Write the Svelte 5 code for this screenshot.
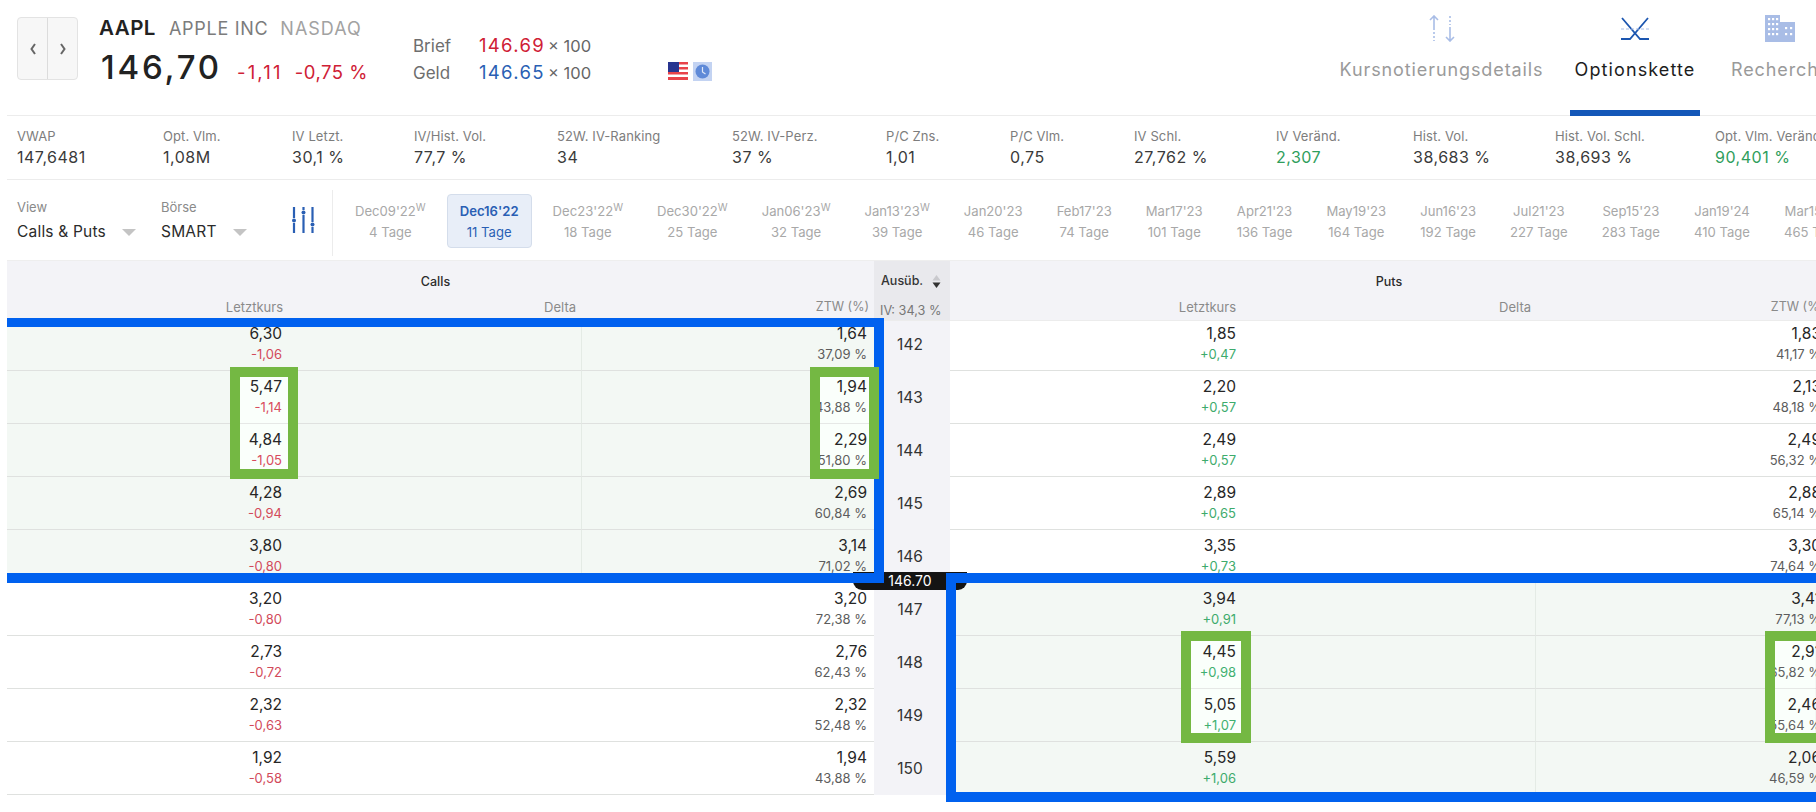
<script>
  const stats = [
    { l: 'VWAP', v: '147,6481' }, { l: 'Opt. Vlm.', v: '1,08M' }, { l: 'IV Letzt.', v: '30,1 %' },
    { l: 'IV/Hist. Vol.', v: '77,7 %' }, { l: '52W. IV-Ranking', v: '34' }, { l: '52W. IV-Perz.', v: '37 %' },
    { l: 'P/C Zns.', v: '1,01' }, { l: 'P/C Vlm.', v: '0,75' }, { l: 'IV Schl.', v: '27,762 %' },
    { l: 'IV Veränd.', v: '2,307', g: true }, { l: 'Hist. Vol.', v: '38,683 %' }, { l: 'Hist. Vol. Schl.', v: '38,693 %' },
    { l: 'Opt. Vlm. Veränd.', v: '90,401 %', g: true }
  ];
  const exps = [
    ["Dec09'22", '4 Tage', true], ["Dec16'22", '11 Tage', false, true], ["Dec23'22", '18 Tage', true],
    ["Dec30'22", '25 Tage', true], ["Jan06'23", '32 Tage', true], ["Jan13'23", '39 Tage', true],
    ["Jan20'23", '46 Tage'], ["Feb17'23", '74 Tage'], ["Mar17'23", '101 Tage'], ["Apr21'23", '136 Tage'],
    ["May19'23", '164 Tage'], ["Jun16'23", '192 Tage'], ["Jul21'23", '227 Tage'], ["Sep15'23", '283 Tage'],
    ["Jan19'24", '410 Tage'], ["Mar15'24", '465 Tage']
  ];
  const rows = [
    [142, '6,30', '-1,06', '1,64', '37,09 %', '1,85', '+0,47', '1,83', '41,17 %'],
    [143, '5,47', '-1,14', '1,94', '43,88 %', '2,20', '+0,57', '2,13', '48,18 %'],
    [144, '4,84', '-1,05', '2,29', '51,80 %', '2,49', '+0,57', '2,49', '56,32 %'],
    [145, '4,28', '-0,94', '2,69', '60,84 %', '2,89', '+0,65', '2,88', '65,14 %'],
    [146, '3,80', '-0,80', '3,14', '71,02 %', '3,35', '+0,73', '3,30', '74,64 %'],
    [147, '3,20', '-0,80', '3,20', '72,38 %', '3,94', '+0,91', '3,41', '77,13 %'],
    [148, '2,73', '-0,72', '2,76', '62,43 %', '4,45', '+0,98', '2,91', '65,82 %'],
    [149, '2,32', '-0,63', '2,32', '52,48 %', '5,05', '+1,07', '2,46', '55,64 %'],
    [150, '1,92', '-0,58', '1,94', '43,88 %', '5,59', '+1,06', '2,06', '46,59 %']
  ];
</script>

<div class="page">
  <header class="top">
    <div class="nav">
      <button class="navb" aria-label="prev"><svg width="10" height="14" viewBox="0 0 10 14"><path d="M7 2 3.500 7 7 12" fill="none" stroke="#666" stroke-width="2"/></svg></button>
      <button class="navb" aria-label="next"><svg width="10" height="14" viewBox="0 0 10 14"><path d="M3 2l3.500 5L3 12" fill="none" stroke="#666" stroke-width="2"/></svg></button>
    </div>
    <div class="sym">
      <div class="symline"><b>AAPL</b><span class="co">APPLE INC</span><span class="ex">NASDAQ</span></div>
      <div class="priceline"><span class="price">146,70</span><span class="chg chg1">-1,11</span><span class="chg">-0,75 %</span></div>
    </div>
    <div class="quote">
      <div class="ql"><span class="qn">Brief</span><span class="qv red">146.69</span><span class="qs">× 100</span></div>
      <div class="ql"><span class="qn">Geld</span><span class="qv blue">146.65</span><span class="qs">× 100</span></div>
    </div>
    <div class="flags">
      <svg width="20" height="18" viewBox="0 0 20 18">
        <rect width="20" height="18" fill="#fff"/>
        <g fill="#e8434a"><rect y="0" width="20" height="2.5"/><rect y="5" width="20" height="2.5"/><rect y="10" width="20" height="2.5"/><rect y="15" width="20" height="3"/></g>
        <rect width="11" height="10" fill="#27348f"/>
      </svg>
      <svg width="19" height="19" viewBox="0 0 19 19">
        <rect width="19" height="19" fill="#c3d3f2"/>
        <circle cx="9.5" cy="9.5" r="7" fill="#5f8ad8"/>
        <path d="M9.5 5v5l3 2" fill="none" stroke="#dfe8f8" stroke-width="1.2"/>
      </svg>
    </div>
    <nav class="tabs">
      <div class="tab kurs">
        <svg width="26" height="27" viewBox="0 0 26 27" fill="none" stroke="#a9bde6" stroke-width="1.6">
          <path d="M5 1v14M1 5l4-4 4 4"/><path d="M5 17v9" stroke-dasharray="2 2"/>
          <path d="M21 1v9" stroke-dasharray="2 2"/><path d="M21 12v14M17 22l4 4 4-4"/>
        </svg>
        <span>Kursnotierungsdetails</span>
      </div>
      <div class="tab opt active">
        <svg width="30" height="27" viewBox="0 0 30 27" fill="none" stroke="#1c56b0" stroke-width="1.8">
          <path d="M2 3l18 21h9M28 3 10 24H1"/><path d="M1 14h28" stroke="#a9bde6" stroke-width="1" stroke-dasharray="3 2"/>
        </svg>
        <span>Optionskette</span>
      </div>
      <div class="tab res">
        <svg width="30" height="27" viewBox="0 0 30 27">
          <path d="M0 0h15v7h15v20H0z" fill="#a9bde6"/>
          <g fill="#fff">
            <rect x="3" y="3" width="2.2" height="2.2"/><rect x="7" y="3" width="2.2" height="2.2"/><rect x="11" y="3" width="2.2" height="2.2"/>
            <rect x="3" y="8" width="2.2" height="2.2"/><rect x="7" y="8" width="2.2" height="2.2"/><rect x="11" y="8" width="2.2" height="2.2"/>
            <rect x="3" y="13" width="2.2" height="2.2"/><rect x="7" y="13" width="2.2" height="2.2"/><rect x="11" y="13" width="2.2" height="2.2"/>
            <rect x="3" y="18" width="2.2" height="2.2"/><rect x="7" y="18" width="2.2" height="2.2"/><rect x="11" y="18" width="2.2" height="2.2"/>
            <rect x="20" y="12" width="2.2" height="2.2"/><rect x="25" y="12" width="2.2" height="2.2"/>
            <rect x="20" y="18" width="2.2" height="2.2"/><rect x="25" y="18" width="2.2" height="2.2"/>
          </g>
        </svg>
        <span>Recherche</span>
      </div>
    </nav>
  </header>

  <section class="stats">
    {#each stats as s}
      <div class="stat"><div class="sl">{s.l}</div><div class="sv" class:green={s.g}>{s.v}</div></div>
    {/each}
  </section>

  <section class="expbar">
    <div class="sel view"><div class="sl2">View</div><div class="sv2">Calls &amp; Puts<i class="tri"></i></div></div>
    <div class="sel bors"><div class="sl2">Börse</div><div class="sv2">SMART<i class="tri"></i></div></div>
    <svg class="sliders" width="24" height="28" viewBox="0 0 24 28" fill="#2a5fb4" stroke="#2a5fb4" stroke-width="2.2">
      <path d="M3 1v11M3 17v10M12.500 1v3M12.500 9v18M21.500 1v15M21.500 21v6" fill="none"/>
      <circle cx="3" cy="14.500" r="2" stroke="none"/><circle cx="12.500" cy="6.500" r="2" stroke="none"/><circle cx="21.500" cy="18.500" r="2" stroke="none"/>
    </svg>
    <div class="exps">
      {#each exps as e}
        <div class="exp" class:on={e[3]}>
          <div class="ed">{e[0]}{#if e[2]}<sup>W</sup>{/if}</div>
          <div class="et">{e[1]}</div>
        </div>
      {/each}
    </div>
  </section>

  <section class="table">
    <div class="hrow">
      <div class="hside calls">
        <div class="htitle">Calls</div>
        <div class="hcols c3"><span>Letztkurs</span><span>Delta</span><span class="ztw">ZTW (%)</span></div>
      </div>
      <div class="hstrike">
        <div class="aus">Ausüb.
          <svg width="9" height="15" viewBox="0 0 9 15"><path d="M4.500 1l4 5.500H.5z" fill="#c9c9cd"/><path d="M4.500 14 .5 8.500h8z" fill="#333"/></svg>
        </div>
        <div class="iv">IV: 34,3 %</div>
      </div>
      <div class="hside puts">
        <div class="htitle">Puts</div>
        <div class="hcols p3"><span>Letztkurs</span><span>Delta</span><span class="ztw">ZTW (%)</span></div>
      </div>
    </div>
    {#each rows as r, i}
      <div class="row" class:first={i === 0}>
        <div class="cell c1" class:itm={i < 5}><div class="v">{r[1]}</div><div class="s red">{r[2]}</div></div>
        <div class="cell c2" class:itm={i < 5}></div>
        <div class="cell c3c" class:itm={i < 5}><div class="v">{r[3]}</div><div class="s">{r[4]}</div></div>
        <div class="strike">{r[0]}</div>
        <div class="cell p1" class:itm={i >= 5}><div class="v">{r[5]}</div><div class="s green">{r[6]}</div></div>
        <div class="cell p2" class:itm={i >= 5}></div>
        <div class="cell p3c" class:itm={i >= 5}><div class="v">{r[7]}</div><div class="s">{r[8]}</div></div>
      </div>
    {/each}
  </section>

  <div class="pill">146.70</div>
  <div class="bluebox b1"></div>
  <div class="bluebox b2"></div>
  <div class="gbox g1"></div>
  <div class="gbox g2"></div>
  <div class="gbox g3"></div>
  <div class="gbox g4"></div>
</div>

<style>
  :global(body) { margin: 0; background: #fff; }
  .page { position: relative; width: 1816px; height: 812px; overflow: hidden; font-family: Inter, "Liberation Sans", sans-serif; color: #222; background: #fff; }

  .top { height: 115px; margin-left: 7px; border-bottom: 1px solid #ececec; display: flex; align-items: flex-start; box-sizing: content-box; }
  .nav { display: flex; margin: 17px 0 0 10px; width: 61px; height: 63px; border: 1px solid #e3e3e3; border-radius: 4px; box-sizing: border-box; background: #f7f7f7; flex-shrink: 0; }
  .navb { flex: 1; border: 0; background: none; padding: 0; display: flex; align-items: center; justify-content: center; }
  .navb:first-child { border-right: 1px solid #dcdcdc; }
  .sym { margin: 16px 0 0 21px; width: 314px; flex-shrink: 0; }
  .symline { display: flex; align-items: baseline; font-size: 18px; line-height: 24px; white-space: nowrap; }
  .symline b { font-size: 20.5px; letter-spacing: .5px; font-weight: 600; color: #222; margin-right: 12px; width: 58px; }
  .co { color: #7c7c7c; margin-right: 12px; letter-spacing: .7px; }
  .ex { color: #a2a2a2; letter-spacing: 1px; }
  .priceline { display: flex; align-items: baseline; margin-top: 5px; line-height: 42px; white-space: nowrap; }
  .price { font-size: 33px; font-weight: 500; letter-spacing: 2.8px; margin: 0 15px 0 2px; color: #222; }
  .chg { font-size: 18.5px; letter-spacing: .5px; color: #cf2035; }
  .chg1 { letter-spacing: 2.2px; margin-right: 12px; }
  .quote { margin-top: 32px; width: 255px; flex-shrink: 0; }
  .ql { display: flex; align-items: baseline; line-height: 27px; height: 27px; font-size: 17px; white-space: nowrap; }
  .qn { width: 66px; color: #6e6e6e; }
  .qv { font-size: 18.5px; letter-spacing: 1.3px; margin-right: 1px; width: 68px; }
  .qs { font-size: 16.5px; color: #666; }
  .red { color: #cf2035; }
  .blue { color: #2a5fb4; }
  .flags { margin-top: 62px; display: flex; gap: 5px; align-items: flex-start; width: 0; }
  .flags svg { flex-shrink: 0; }

  .tabs { display: flex; margin-left: 672px; height: 115px; flex-shrink: 0; }
  .tab { position: relative; display: flex; flex-direction: column; align-items: center; font-size: 18px; letter-spacing: .9px; color: #9a9a9a; white-space: nowrap; padding-top: 15px; }
  .tab svg { height: 27px; }
  .tab span { margin-top: 16px; line-height: 24px; }
  .kurs { width: 203px; }
  .opt { width: 130px; margin-left: 27px; color: #1d1d1d; letter-spacing: 1.100px; }
  .res { margin-left: 31px; align-items: flex-start; }
  .res svg { margin-left: 34px; }
  .opt::after { content: ""; position: absolute; left: 0; right: 0; bottom: -1px; height: 6px; background: #1457b8; }

  .stats { height: 64px; margin-left: 7px; padding-left: 10px; border-bottom: 1px solid #ececec; display: grid; grid-template-columns: 146px 129px 122px 143px 175px 154px 124px 124px 142px 137px 142px 160px 120px; align-content: start; padding-top: 11px; box-sizing: border-box; white-space: nowrap; }
  .sl { font-size: 13px; letter-spacing: .1px; line-height: 18px; color: #7d7d7d; }
  .sv { font-size: 16px; letter-spacing: .5px; line-height: 22px; color: #3a3a3a; margin-top: 1px; }
  .green { color: #2f9e5c; }

  .expbar { height: 80px; margin-left: 7px; display: flex; position: relative; box-sizing: border-box; }
  .sel { padding-top: 17px; flex-shrink: 0; }
  .view { margin-left: 10px; width: 144px; }
  .bors { width: 130px; }
  .sl2 { font-size: 13px; line-height: 20px; color: #8a8a8a; }
  .sv2 { font-size: 15.5px; letter-spacing: .2px; line-height: 24px; margin-top: 3px; color: #2b2b2b; display: flex; align-items: center; white-space: nowrap; }
  .tri { display: inline-block; width: 0; height: 0; border-left: 7px solid transparent; border-right: 7px solid transparent; border-top: 7px solid #c4c4c4; margin-left: 16px; }
  .sliders { margin-top: 26px; flex-shrink: 0; margin-right: 17px; }
  .exps { display: flex; gap: 8px; border-left: 1px solid #ececec; margin-top: 10px; height: 66px; padding-left: 9px; flex-shrink: 0; padding-top: 4px; box-sizing: border-box; }
  .exp { padding: 0 12px; height: 54px; border: 1px solid transparent; border-radius: 4px; box-sizing: border-box; text-align: center; color: #a8a8a8; white-space: nowrap; font-size: 13.1px; display: flex; flex-direction: column; justify-content: center; gap: 3px; }
  .exp.on { background: #e8eef8; border-color: #d4ddeb; color: #2a5fb4; }
  .ed { line-height: 18px; }
  .et { line-height: 18px; }
  .on .ed { font-weight: 600; }
  sup { font-size: 10px; line-height: 0; vertical-align: 5px; }

  .table { margin-left: 7px; border-top: 1px solid #eee; width: 1830px; }
  .hrow { display: flex; height: 60px; border-bottom: 1px solid #ececec; box-sizing: border-box; background: #f3f3f7; }
  .hside { position: relative; }
  .calls { width: 867px; }
  .puts { width: 878px; }
  .htitle { text-align: center; font-size: 12.5px; font-weight: 500; color: #2b2b2b; line-height: 18px; padding-top: 12px; }
  .calls .htitle { padding-right: 10px; }
  .hcols { display: grid; font-size: 13px; color: #8a8a8a; margin-top: 7px; line-height: 18px; text-align: right; }
  .ztw { font-size: 12.5px; }
  .c3 { grid-template-columns: 276px 293px 293px; }
  .p3 { grid-template-columns: 286px 295px 293px; }
  .hstrike { width: 76px; background: #e9e9ed; padding: 9px 0 0 7px; box-sizing: border-box; }
  .aus { display: flex; align-items: center; font-size: 12.5px; font-weight: 500; color: #333; line-height: 22px; gap: 9px; white-space: nowrap; }
  .iv { font-size: 12.7px; color: #777; line-height: 18px; margin: 10px 0 0 -1px; white-space: nowrap; }

  .row { display: grid; grid-template-columns: 289px 286px 292px 76px 300px 286px 292px; height: 53px; }
  .row.first { height: 50px; }
  .cell { border-bottom: 1px solid #dfe1df; box-sizing: border-box; text-align: right; padding-top: 6px; }
  .first .cell { padding-top: 3px; }
  .itm { background: #f3f8f4; }
  .c1, .p1 { padding-right: 14px; }
  .c3c, .p3c { padding-right: 7px; }
  .c2.itm, .p2.itm { border-right: 1px solid #e4ebe5; }
  .v { font-size: 15.5px; line-height: 20px; color: #262626; }
  .s { font-size: 13px; line-height: 20px; color: #5c5c5c; }
  .s.red { color: #d24a5a; }
  .s.green { color: #3dab6c; }
  .strike { background: #f3f3f7; display: flex; align-items: center; justify-content: center; font-size: 15.5px; color: #333; padding-right: 4px; }
  .first .strike { padding-bottom: 4px; }

  .pill { position: absolute; left: 853px; top: 572px; width: 114px; height: 18px; border-radius: 0 0 9px 9px; background: #141414; color: #fff; font-size: 14px; line-height: 18px; text-align: center; }
  .bluebox { position: absolute; border: 0 solid #0061ef; box-sizing: border-box; }
  .b1 { left: 7px; top: 318px; width: 877px; height: 265px; border-width: 9px 10px 10px 0; }
  .b2 { left: 946px; top: 573px; width: 890px; height: 229px; border-width: 10px 0 10px 10px; }
  .gbox { position: absolute; top: 367px; height: 112px; border: 10px solid #74b843; box-sizing: border-box; backdrop-filter: brightness(1.03); }
  .g1 { left: 230px; width: 68px; }
  .g2 { left: 810px; width: 69px; }
  .g3 { left: 1181px; top: 631px; width: 70px; }
  .g4 { left: 1765px; top: 631px; width: 70px; }
</style>
